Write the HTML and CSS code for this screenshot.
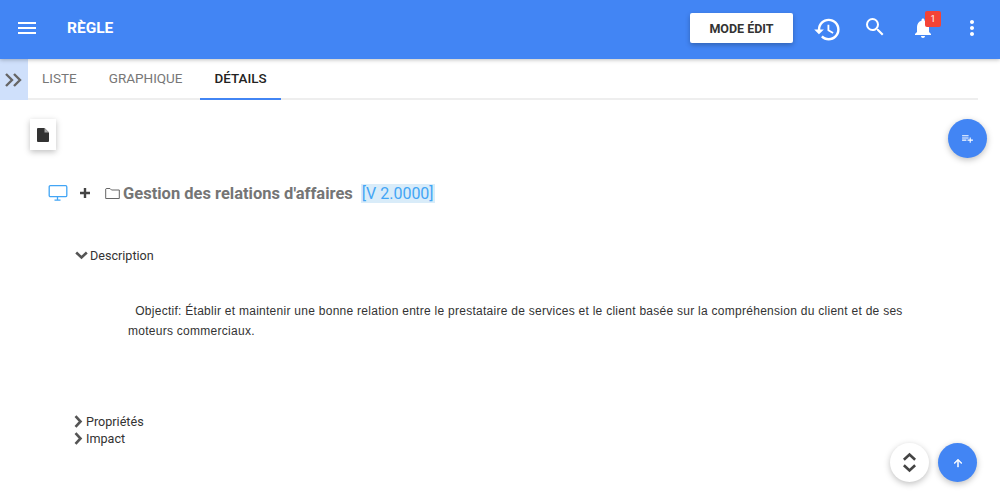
FILE: index.html
```html
<!DOCTYPE html>
<html lang="fr">
<head>
  <meta charset="UTF-8">
  <meta name="viewport" content="width=device-width, initial-scale=1.0">
  <title>Règle</title>
  <link rel="stylesheet" href="styles.css">
</head>
<body>
  <header class="topbar">
    <button class="icon-btn menu-btn">
      <svg width="24" height="24" viewBox="0 0 24 24" fill="#fff"><path d="M3 18h18v-2H3v2zm0-5h18v-2H3v2zm0-7v2h18V6H3z"/></svg>
    </button>
    <span class="page-title">RÈGLE</span>
    <button class="mode-btn">MODE ÉDIT</button>
    <button class="icon-btn history-btn">
      <svg width="29" height="29" viewBox="0 0 24 24" fill="#fff"><path d="M13 3a9 9 0 0 0-9 9H1l3.89 3.89.07.14L9 12H6c0-3.87 3.13-7 7-7s7 3.13 7 7-3.13 7-7 7c-1.93 0-3.68-.79-4.94-2.06l-1.42 1.42A8.954 8.954 0 0 0 13 21a9 9 0 0 0 0-18zm-1 5v5l4.28 2.54.72-1.21-3.5-2.08V8H12z"/></svg>
    </button>
    <button class="icon-btn search-btn">
      <svg width="24" height="24" viewBox="0 0 24 24" fill="#fff"><path d="M15.5 14h-.79l-.28-.27A6.471 6.471 0 0 0 16 9.5 6.5 6.5 0 1 0 9.5 16c1.61 0 3.09-.59 4.23-1.57l.27.28v.79l5 4.99L20.49 19l-4.99-5zm-6 0C7.01 14 5 11.99 5 9.5S7.01 5 9.5 5 14 7.01 14 9.5 11.99 14 9.5 14z"/></svg>
    </button>
    <button class="icon-btn bell-btn">
      <svg width="24" height="24" viewBox="0 0 24 24" fill="#fff"><path d="M12 22c1.1 0 2-.9 2-2h-4c0 1.1.89 2 2 2zm6-6v-5c0-3.07-1.64-5.64-4.5-6.32V4c0-.83-.67-1.5-1.5-1.5s-1.5.67-1.5 1.5v.68C7.63 5.36 6 7.92 6 11v5l-2 2v1h16v-1l-2-2z"/></svg>
      <span class="badge">1</span>
    </button>
    <button class="icon-btn more-btn">
      <svg width="24" height="24" viewBox="0 0 24 24" fill="#fff"><path d="M12 8c1.1 0 2-.9 2-2s-.9-2-2-2-2 .9-2 2 .9 2 2 2zm0 2c-1.1 0-2 .9-2 2s.9 2 2 2 2-.9 2-2-.9-2-2-2zm0 6c-1.1 0-2 .9-2 2s.9 2 2 2 2-.9 2-2-.9-2-2-2z"/></svg>
    </button>
  </header>

  <nav class="tabs">
    <button class="side-toggle">
      <svg width="20" height="16" viewBox="0 0 20 16" fill="none" stroke="#666" stroke-width="2.4"><path d="M2 2l6 6-6 6M10 2l6 6-6 6"/></svg>
    </button>
    <a class="tab">LISTE</a>
    <a class="tab">GRAPHIQUE</a>
    <a class="tab active">DÉTAILS</a>
  </nav>

  <main class="content">
    <button class="doc-btn">
      <svg width="12" height="14" viewBox="0 0 12 14"><path fill="#333" d="M1 0h6.500L12 4.500V13a1 1 0 0 1-1 1H1a1 1 0 0 1-1-1V1a1 1 0 0 1 1-1z"/><path fill="#aaa" d="M7.500 0v4.500H12z"/></svg>
    </button>

    <h1 class="rule-title">
      <svg class="monitor" width="20" height="18" viewBox="0 0 20 18" fill="none" stroke="#42a5f5" stroke-width="1.3"><rect x="1.200" y="1.700" width="17.600" height="11" rx="1.200"/><path d="M6.500 16.200h6M9.500 12.700v3.500"/></svg>
      <svg class="plus" width="12" height="12" viewBox="0 0 12 12" fill="#444"><path d="M4.800 1h2.400v3.800H11v2.400H7.200V11H4.800V7.200H1V4.800h3.800z"/></svg>
      <svg class="folder" width="15" height="13" viewBox="0 0 15 13" fill="none" stroke="#666" stroke-width="1"><path d="M.7 2V11.500H14.300V3H6.500L5 1.500H1.200z"/></svg>
      <span class="rule-name">Gestion des relations d'affaires</span>
      <span class="version">[V 2.0000]</span>
    </h1>

    <section class="desc">
      <div class="section-head">
        <svg width="13" height="9" viewBox="0 0 13 9" fill="none" stroke="#555" stroke-width="2.600"><path d="M1.200 1.500l5.300 5 5.300-5"/></svg>
        <span>Description</span>
      </div>
      <p class="desc-text">&nbsp; Objectif: Établir et maintenir une bonne relation entre le prestataire de services et le client basée sur la compréhension du client et de ses moteurs commerciaux.</p>
    </section>

    <div class="section-head closed">
      <svg width="9" height="13" viewBox="0 0 9 13" fill="none" stroke="#555" stroke-width="2.600"><path d="M1.500 1.200l5 5.300-5 5.300"/></svg>
      <span>Propriétés</span>
    </div>
    <div class="section-head closed">
      <svg width="9" height="13" viewBox="0 0 9 13" fill="none" stroke="#555" stroke-width="2.600"><path d="M1.500 1.200l5 5.300-5 5.300"/></svg>
      <span>Impact</span>
    </div>
  </main>

  <button class="fab fab-add">
    <svg width="13" height="13" viewBox="0 0 24 24" fill="#fff"><path d="M14 10H2v2h12v-2zm0-4H2v2h12V6zm4 8v-4h-2v4h-4v2h4v4h2v-4h4v-2h-4zM2 16h8v-2H2v2z"/></svg>
  </button>
  <button class="fab fab-expand">
    <svg width="15" height="21" viewBox="0 0 16 22" fill="none" stroke="#444" stroke-width="2.800"><path d="M2 8l6-5.500L14 8M2 14l6 5.500L14 14"/></svg>
  </button>
  <button class="fab fab-up">
    <svg width="12" height="12" viewBox="0 0 24 24" fill="#fff" stroke="#fff" stroke-width="1"><path d="M4 12l1.410 1.410L11 7.830V20h2V7.830l5.580 5.590L20 12l-8-8-8 8z"/></svg>
  </button>
</body>
</html>
```

FILE: styles.css
```css
html, body {
  height: 100%;
}
body {
  margin: 0;
  overflow: hidden;
  background: #fff;
  font-family: Roboto, "Liberation Sans", sans-serif;
  color: #333;
}
button {
  border: 0;
  padding: 0;
  background: none;
  font-family: inherit;
}
svg {
  flex: none;
}
.topbar {
  display: flex;
  align-items: center;
  height: 56px;
  padding-bottom: 3px;
  background: #4285f4;
  box-shadow: 0 1px 4px rgba(0,0,0,.25);
  position: relative;
  z-index: 1;
}
.icon-btn {
  display: flex;
  align-items: center;
  justify-content: center;
  width: 24px;
  height: 24px;
  position: relative;
}
.menu-btn {
  margin-left: 15px;
}
.page-title {
  margin-left: 28px;
  color: #fff;
  font-size: 15.5px;
  font-weight: 700;
}
.mode-btn {
  margin-left: auto;
  width: 103px;
  height: 30px;
  background: #fff;
  border-radius: 2px;
  color: #333;
  font-size: 12.5px;
  font-weight: 700;
  box-shadow: 0 2px 5px rgba(0,0,0,.26);
}
.history-btn {
  margin-left: 22px;
  top: 1px;
}
.search-btn {
  margin-left: 24px;
  top: -1px;
}
.bell-btn {
  margin-left: 24px;
}
.more-btn {
  margin-left: 25px;
  margin-right: 16px;
}
.badge {
  position: absolute;
  top: -5px;
  left: 14px;
  width: 16px;
  height: 16px;
  line-height: 16px;
  background: #f44336;
  border-radius: 2px;
  color: #fff;
  font-size: 9px;
  text-align: center;
}
.tabs {
  display: flex;
  height: 39px;
  margin-right: 22px;
  border-bottom: 2px solid #eee;
}
.side-toggle {
  display: flex;
  align-items: center;
  justify-content: center;
  width: 28px;
  height: 41px;
  background: #cfe0fb;
}
.tab {
  display: flex;
  align-items: center;
  padding: 0 15px 1px;
  font-size: 13.5px;
  font-weight: 400;
  color: #777;
}
.tab:first-of-type {
  padding: 0 17px 1px 14px;
}
.tab:nth-of-type(2) {
  padding-right: 17px;
}
.tab.active {
  height: 41px;
  padding-right: 14px;
  border-bottom: 2px solid #4285f4;
  box-sizing: border-box;
  color: #222;
  font-size: 13.4px;
  font-weight: 500;
}
.content {
  padding: 19px 0 0 30px;
}
.doc-btn {
  display: flex;
  align-items: center;
  justify-content: center;
  width: 26px;
  height: 31px;
  background: #fff;
  box-shadow: 0 2px 6px rgba(0,0,0,.25);
}
.rule-title {
  display: flex;
  align-items: center;
  margin: 32px 0 0 18px;
  height: 22px;
  font-size: 16.5px;
  font-weight: 700;
  color: #757575;
}
.plus {
  margin-left: 11px;
}
.folder {
  margin-left: 14px;
}
.rule-name {
  margin-left: 3px;
}
.version {
  margin-left: 8px;
  padding: 0 1px;
  background: #d9ecf9;
  color: #42a5f5;
  font-size: 16px;
  font-weight: 400;
}
.desc {
  margin-left: 45px;
}
.section-head {
  display: flex;
  align-items: center;
  gap: 2px;
  height: 17px;
  font-size: 12.6px;
  color: #333;
}
.desc > .section-head {
  margin-top: 43px;
}
.closed {
  margin-left: 44px;
  gap: 3px;
}
.desc-text {
  width: 780px;
  margin: 37px 0 72px 53px;
  font-family: "Liberation Sans", Arial, sans-serif;
  font-size: 12px;
  line-height: 20px;
  letter-spacing: .27px;
  color: #333;
}
.fab {
  display: flex;
  align-items: center;
  justify-content: center;
  position: fixed;
  width: 39px;
  height: 39px;
  border-radius: 50%;
  background: #4285f4;
  box-shadow: 0 2px 6px rgba(0,0,0,.25);
}
.fab-add {
  top: 119px;
  left: 948px;
}
.fab-expand {
  top: 443px;
  left: 890px;
  background: #fff;
}
.fab-up {
  top: 443px;
  left: 938px;
}
```
